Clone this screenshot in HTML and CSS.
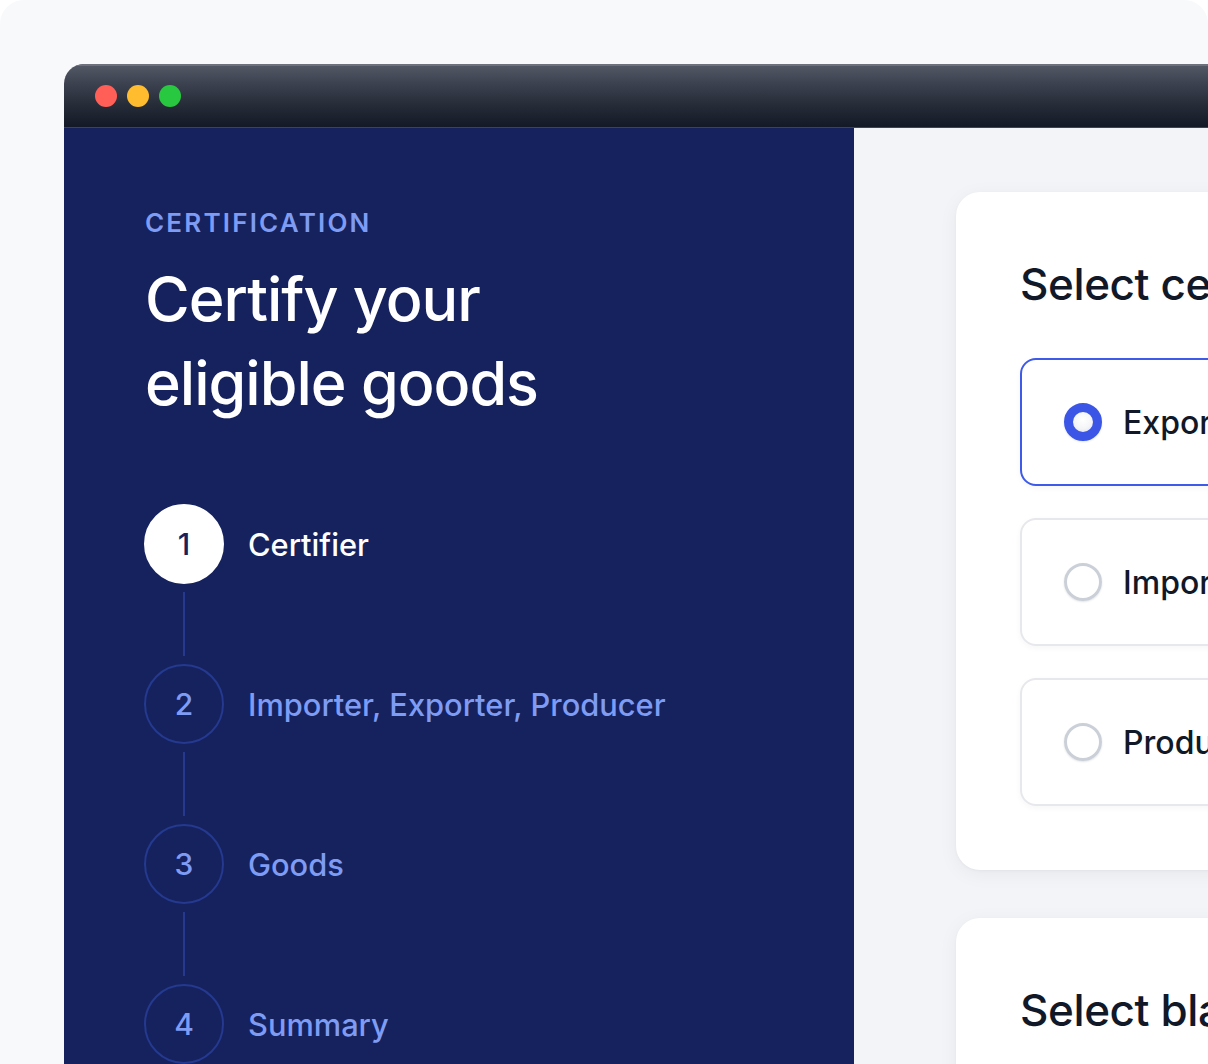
FILE: index.html
```html
<!DOCTYPE html>
<html lang="en">
<head>
<meta charset="utf-8">
<title>Certify your eligible goods</title>
<link rel="stylesheet" href="styles.css">
</head>
<body>
<div class="frame">
  <div class="window">
    <div class="titlebar">
      <span class="light red"></span>
      <span class="light yellow"></span>
      <span class="light green"></span>
    </div>
    <div class="app">
      <aside class="sidebar">
        <p class="eyebrow">CERTIFICATION</p>
        <h1 class="title">Certify your<br>eligible goods</h1>
        <ol class="steps">
          <li class="step active"><span class="num">1</span><span class="label">Certifier</span></li>
          <li class="connector"></li>
          <li class="step"><span class="num">2</span><span class="label">Importer, Exporter, Producer</span></li>
          <li class="connector"></li>
          <li class="step"><span class="num">3</span><span class="label">Goods</span></li>
          <li class="connector"></li>
          <li class="step"><span class="num">4</span><span class="label">Summary</span></li>
        </ol>
      </aside>
      <main class="content">
        <section class="card">
          <h2 class="card-title">Select certifier type</h2>
          <div class="options">
            <label class="option selected"><span class="radio"></span><span class="opt-text">Exporter</span></label>
            <label class="option"><span class="radio"></span><span class="opt-text">Importer</span></label>
            <label class="option"><span class="radio"></span><span class="opt-text">Producer</span></label>
          </div>
        </section>
        <section class="card">
          <h2 class="card-title">Select blanket period</h2>
        </section>
      </main>
    </div>
  </div>
</div>
</body>
</html>
```

FILE: styles.css
```css
* { box-sizing: border-box; }
html, body { margin: 0; padding: 0; background: #ffffff; }
body { font-family: Inter, "Noto Sans", sans-serif; }

.frame {
  width: 1208px;
  height: 1064px;
  background: #f8f9fb;
  border-radius: 24px 24px 0 0;
  overflow: hidden;
  padding: 64px 0 0 64px;
}

.window {
  width: 1500px;
  height: 1200px;
  border-radius: 20px 20px 0 0;
  overflow: hidden;
  display: flex;
  flex-direction: column;
}

.titlebar {
  height: 64px;
  flex: none;
  display: flex;
  align-items: center;
  gap: 10px;
  padding-left: 31px;
  background: linear-gradient(#555a67 0, #3d4250 30%, #262b38 65%, #131826 100%);
  box-shadow: inset 0 2px 0 #6d717b, inset 0 -1px 0 #3f4452;
}
.light { width: 22px; height: 22px; border-radius: 50%; }
.red { background: #ff5f57; }
.yellow { background: #febc2e; }
.green { background: #28c840; }

.app { display: flex; flex: 1; }

.sidebar {
  width: 790px;
  flex: none;
  background: #16225e;
  padding: 79px 80px 0 80px;
}
.eyebrow {
  margin: 0;
  font-size: 26px;
  line-height: 32px;
  font-weight: 600;
  letter-spacing: 2.2px;
  color: #7f9cf5;
  padding-left: 1px;
}
.title {
  margin: 18px 0 0;
  font-size: 61px;
  line-height: 84px;
  font-weight: 500;
  letter-spacing: -1px;
  color: #ffffff;
  padding-left: 1px;
}
.steps {
  list-style: none;
  margin: 79px 0 0;
  padding: 0;
}
.step {
  display: flex;
  align-items: center;
  gap: 24px;
}
.num {
  width: 80px;
  height: 80px;
  flex: none;
  border-radius: 50%;
  border: 2px solid #24398f;
  display: flex;
  align-items: center;
  justify-content: center;
  font-size: 30px;
  font-weight: 500;
  color: #7f9cf5;
}
.label {
  font-size: 30.8px;
  font-weight: 500;
  color: #7f9cf5;
}
.step.active .num { background: #ffffff; border-color: #ffffff; color: #16225e; }
.step.active .label { color: #ffffff; }
.connector {
  width: 2px;
  height: 64px;
  margin: 8px 0 8px 39px;
  background: #24398f;
}

.content {
  flex: 1;
  background: #f3f4f7;
  padding: 64px 0 0 102px;
  display: flex;
  flex-direction: column;
  gap: 48px;
}
.card {
  background: #ffffff;
  border-radius: 24px;
  padding: 66px 64px 64px 64px;
  box-shadow: 0 4px 20px rgba(17, 24, 39, 0.05), 0 1px 3px rgba(17, 24, 39, 0.04);
}
.card-title {
  margin: 0;
  font-size: 44px;
  line-height: 52px;
  font-weight: 500;
  letter-spacing: -0.4px;
  color: #111827;
}
.options {
  margin-top: 48px;
  display: flex;
  flex-direction: column;
  gap: 32px;
}
.option {
  height: 128px;
  border: 2px solid #e6e8ec;
  border-radius: 16px;
  display: flex;
  align-items: center;
  gap: 21px;
  padding-left: 42px;
  box-shadow: 0 2px 6px rgba(17, 24, 39, 0.04);
}
.option.selected { border-color: #3d5ae8; }
.radio {
  width: 38px;
  height: 38px;
  flex: none;
  border-radius: 50%;
  border: 3px solid #cbd0d8;
  box-shadow: 0 1px 2px rgba(17, 24, 39, 0.12);
}
.option.selected .radio {
  border: 9px solid #3b56e6;
  background: radial-gradient(circle at 50% 40%, #ffffff 0, #f4f5f7 55%, #d9dce2 100%);
}
.opt-text {
  font-size: 32px;
  font-weight: 500;
  color: #111827;
}
```
